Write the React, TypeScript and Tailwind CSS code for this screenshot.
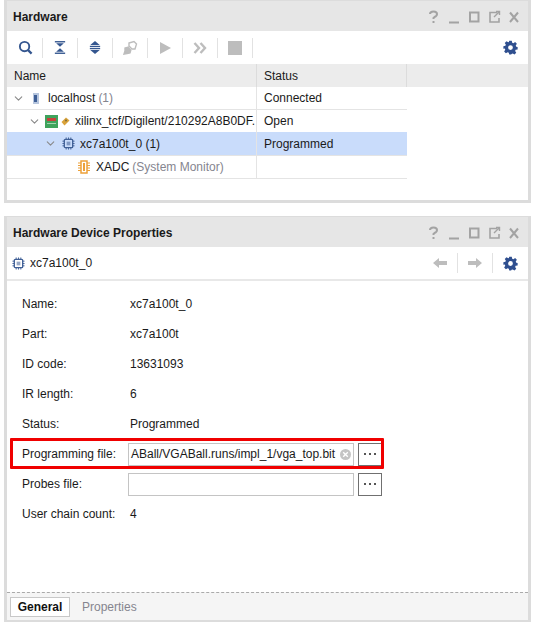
import { ChevronDown } from "lucide-react";
import type { ReactNode } from "react";

function TitleBar({ title }: { title: string }) {
  return (
    <div className="flex h-[30px] shrink-0 items-center justify-between bg-[#e6e6e6] pl-[6px] pr-[9px] pt-[2px]">
      <span className="text-[12px] font-bold text-[#1a1a1a]">{title}</span>
      <svg width="92" height="14" viewBox="0 0 92 14" fill="none" stroke="#a3a3a3" strokeWidth="2">
        <path d="M3 4 Q3 1.5 6.5 1.5 Q10 1.5 10 4 Q10 6 7.5 7 L6.5 8 V9" />
        <rect x="5.5" y="11" width="2" height="2" fill="#a3a3a3" stroke="none" />
        <path d="M22 12.5 H32" />
        <rect x="43" y="2.5" width="8.5" height="9" />
        <path d="M70 2.5 H63 V12 H72 V8" strokeWidth="1.6" />
        <path d="M67 7 L72 2 M69 1.5 H72.5 V5" strokeWidth="1.4" />
        <path d="M83 2.5 L91 12 M91 2.5 L83 12" />
      </svg>
    </div>
  );
}

function Gear() {
  return (
    <svg width="15" height="15" viewBox="0 0 24 24" fill="#2f4f8f">
      <path
        fillRule="evenodd"
        d="M10 1h4l.7 3.2 1.9.8 2.8-1.8 2.8 2.8-1.8 2.8.8 1.9L23.4 11v4l-3.2.7-.8 1.9 1.8 2.8-2.8 2.8-2.8-1.8-1.9.8L13 23h-3l-.7-2.8-1.9-.8-2.8 1.8-2.8-2.8 1.8-2.8-.8-1.9L.6 14v-4l3.2-.7.8-1.9L2.8 4.6 5.6 1.8l2.8 1.8 1-.6zM12 8.2a3.8 3.8 0 1 0 0 7.6 3.8 3.8 0 0 0 0-7.6z"
      />
    </svg>
  );
}

function Chip({ color = "#3f5f96" }: { color?: string }) {
  return (
    <svg width="13" height="13" viewBox="0 0 14 14" fill="none" stroke={color}>
      <rect x="2.5" y="2.5" width="9" height="9" rx="1" strokeWidth="1.4" />
      <rect x="5" y="5" width="4" height="4" fill={color} fillOpacity="0.55" stroke="none" />
      <path d="M4.5 0.5v2M7 0.5v2M9.5 0.5v2M4.5 11.5v2M7 11.5v2M9.5 11.5v2M0.5 4.5h2M0.5 7h2M0.5 9.5h2M11.5 4.5h2M11.5 7h2M11.5 9.5h2" strokeWidth="1" />
    </svg>
  );
}

function ToolSep() {
  return <div className="h-[20px] w-px bg-[#e2e2e2]" />;
}

function ToolButton({ children }: { children: ReactNode }) {
  return <div className="flex w-[34px] items-center justify-center">{children}</div>;
}

function Toolbar() {
  return (
    <div className="flex h-[33px] shrink-0 items-center justify-between">
      <div className="flex items-center pl-px">
        <ToolButton>
          <svg width="15" height="15" viewBox="0 0 16 16" fill="none" stroke="#34568f" strokeWidth="2">
            <circle cx="7" cy="7" r="5" />
            <path d="M10.5 10.5 L14.5 14.5" strokeWidth="2.4" />
          </svg>
        </ToolButton>
        <ToolSep />
        <ToolButton>
          <svg width="12" height="15" viewBox="0 0 14 16" fill="#34568f">
            <rect x="1" y="0.5" width="12" height="1.6" />
            <path d="M2.5 3 H11.5 L7 7 Z M7 9 L11.5 13 H2.5 Z" />
            <rect x="1" y="13.9" width="12" height="1.6" />
          </svg>
        </ToolButton>
        <ToolSep />
        <ToolButton>
          <svg width="12" height="15" viewBox="0 0 14 16" fill="#34568f">
            <path d="M7 0.5 L12.5 5 H1.5 Z" />
            <rect x="1" y="6" width="12" height="1.5" />
            <rect x="1" y="8.5" width="12" height="1.5" />
            <path d="M1.5 11 H12.5 L7 15.5 Z" />
          </svg>
        </ToolButton>
        <ToolSep />
        <ToolButton>
          <svg width="15" height="15" viewBox="0 0 15 15" fill="none" stroke="#bdbdbd" strokeWidth="1.4">
            <path d="M6 3 L11 1.5 L13.5 4 L12 9 L9 9 L6 6 Z" />
            <path d="M6 7 L2 8 L2 11 L1 14 L4 13.5 L7 13 L8 9.5" fill="#bdbdbd" />
          </svg>
        </ToolButton>
        <ToolSep />
        <ToolButton>
          <svg width="13" height="14" viewBox="0 0 13 14" fill="#bdbdbd">
            <path d="M1 1 L12 7 L1 13 Z" />
          </svg>
        </ToolButton>
        <ToolSep />
        <ToolButton>
          <svg width="14" height="12" viewBox="0 0 14 12" fill="none" stroke="#bdbdbd" strokeWidth="2.4">
            <path d="M1.5 1 L6 6 L1.5 11 M7.5 1 L12 6 L7.5 11" />
          </svg>
        </ToolButton>
        <ToolSep />
        <ToolButton>
          <div className="h-[14px] w-[14px] bg-[#bdbdbd]" />
        </ToolButton>
        <ToolSep />
      </div>
      <div className="pr-[10px]">
        <Gear />
      </div>
    </div>
  );
}

function TreeRow({
  indent,
  chevron = true,
  icon,
  label,
  muted,
  status,
  selected,
}: {
  indent: number;
  chevron?: boolean;
  icon: ReactNode;
  label: string;
  muted?: string;
  status?: string;
  selected?: boolean;
}) {
  return (
    <div className={`flex w-[400px] border-b border-[#e4e4e4] ${selected ? "-mt-px h-[24px]" : "h-[23px]"}`}>
      <div
        className={`flex w-[250px] items-center overflow-hidden whitespace-nowrap border-r border-[#e4e4e4] ${selected ? "bg-[#c9dcfb]" : ""}`}
      >
        <div className="flex shrink-0 items-center" style={{ paddingLeft: indent }}>
          {chevron && <ChevronDown size={13} color="#8a8a8a" className="mr-[4px]" />}
          {icon}
        </div>
        <span className="text-[#1a1a1a]">{label}</span>
        {muted && <span className="ml-[3px] text-[#85858f]">{muted}</span>}
      </div>
      <div className={`flex flex-1 items-center pl-[7px] text-[#1a1a1a] ${selected ? "bg-[#c9dcfb]" : ""}`}>{status}</div>
    </div>
  );
}

function PropRow({ label, value }: { label: string; value: string }) {
  return (
    <div className="flex h-[30px] items-center pl-[15px]">
      <span className="w-[108px] text-[#1a1a1a]">{label}</span>
      <span className="text-[#1a1a1a]">{value}</span>
    </div>
  );
}

function DotsButton() {
  return (
    <div className="flex h-[23px] w-[24px] items-center justify-center gap-[3px] border border-[#707070]">
      <div className="h-[2px] w-[2px] bg-[#555]" />
      <div className="h-[2px] w-[2px] bg-[#555]" />
      <div className="h-[2px] w-[2px] bg-[#555]" />
    </div>
  );
}

export default function App() {
  return (
    <div className="h-[627px] w-[542px] bg-white pl-[4px] font-['Liberation_Sans',sans-serif] text-[12px]">
      {/* Hardware panel */}
      <div className="flex h-[203px] w-[527px] flex-col border-x-[3px] border-b-[3px] border-t border-[#dcdcdc]">
        <TitleBar title="Hardware" />
        <Toolbar />
        <div className="flex h-[23px] shrink-0 bg-[#ececec] text-[#1a1a1a]">
          <div className="flex w-[250px] items-center border-r border-[#dcdcdc] pl-[7px]">Name</div>
          <div className="flex w-[150px] items-center border-r border-[#dcdcdc] pl-[7px]">Status</div>
        </div>
        <TreeRow
          indent={5}
          icon={
            <svg width="10" height="13" viewBox="0 0 10 13" className="ml-[2px] mr-[7px]">
              <rect x="2" y="1" width="6" height="11" fill="#b7c6de" />
              <rect x="3" y="3" width="3" height="7" fill="#3f5f96" />
            </svg>
          }
          label="localhost"
          muted="(1)"
          status="Connected"
        />
        <TreeRow
          indent={21}
          icon={
            <div className="mr-[5px] flex items-center gap-[3px]">
              <svg width="13" height="13" viewBox="0 0 13 13">
                <rect width="13" height="13" fill="#3fa35c" />
                <rect x="2" y="3" width="9" height="3" fill="#c9403d" />
                <rect x="2" y="8" width="9" height="1" fill="#9fd4ae" />
              </svg>
              <svg width="9" height="9" viewBox="0 0 9 9">
                <path d="M5 0.5 L8.5 3.5 L3.5 8.5 L0.5 5 Z" fill="#d9a23a" />
                <circle cx="5" cy="3.5" r="1" fill="#7a6a3a" />
              </svg>
            </div>
          }
          label="xilinx_tcf/Digilent/210292A8B0DF."
          status="Open"
        />
        <TreeRow
          indent={37}
          icon={
            <div className="ml-px mr-[5px]">
              <Chip />
            </div>
          }
          label="xc7a100t_0 (1)"
          status="Programmed"
          selected
        />
        <TreeRow
          indent={71}
          chevron={false}
          icon={
            <svg width="12" height="14" viewBox="0 0 12 14" className="mr-[6px]">
              <rect x="3" y="1" width="6" height="12" fill="#fff" stroke="#eda13a" strokeWidth="1.5" />
              <rect x="5" y="3" width="2" height="8" fill="#eda13a" />
              <path d="M0 3h3M0 5.5h3M0 8h3M0 10.5h3M9 3h3M9 5.5h3M9 8h3M9 10.5h3" stroke="#eda13a" />
            </svg>
          }
          label="XADC"
          muted="(System Monitor)"
        />
      </div>

      <div className="h-[13px]" />

      {/* Hardware Device Properties panel */}
      <div className="relative flex h-[406px] w-[527px] flex-col border-x-[3px] border-b-[2px] border-t border-[#dcdcdc]">
        <TitleBar title="Hardware Device Properties" />
        <div className="flex h-[34px] shrink-0 items-center justify-between border-b-[2px] border-[#e8e8e8] pl-[5px]">
          <div className="flex items-center gap-[5px] text-[#1a1a1a]">
            <Chip />
            <span>xc7a100t_0</span>
          </div>
          <div className="flex items-center pr-[10px]">
            <svg width="14" height="10" viewBox="0 0 14 10" fill="#bdbdbd">
              <path d="M0 5 L6 0 V3 H14 V7 H6 V10 Z" />
            </svg>
            <div className="mx-[10px] h-[20px] w-px bg-[#e2e2e2]" />
            <svg width="14" height="10" viewBox="0 0 14 10" fill="#bdbdbd">
              <path d="M14 5 L8 0 V3 H0 V7 H8 V10 Z" />
            </svg>
            <div className="mx-[10px] h-[20px] w-px bg-[#e2e2e2]" />
            <Gear />
          </div>
        </div>

        <div className="flex flex-1 flex-col pt-[8px]">
          <PropRow label="Name:" value="xc7a100t_0" />
          <PropRow label="Part:" value="xc7a100t" />
          <PropRow label="ID code:" value="13631093" />
          <PropRow label="IR length:" value="6" />
          <PropRow label="Status:" value="Programmed" />

          <div className="flex h-[30px] items-center pl-[15px]">
            <span className="w-[106px] text-[#1a1a1a]">Programming file:</span>
            <div className="flex h-[23px] w-[226px] items-center justify-between overflow-hidden border border-[#c4c4c4] pl-[2px] pr-[2px]">
              <span className="whitespace-nowrap text-[#1a1a1a]">ABall/VGABall.runs/impl_1/vga_top.bit</span>
              <svg width="11" height="11" viewBox="0 0 12 12" className="shrink-0">
                <circle cx="6" cy="6" r="6" fill="#c4c4c4" />
                <path d="M3.5 3.5 L8.5 8.5 M8.5 3.5 L3.5 8.5" stroke="#fff" strokeWidth="1.5" />
              </svg>
            </div>
            <div className="ml-[4px]">
              <DotsButton />
            </div>
          </div>

          <div className="flex h-[30px] items-center pl-[15px]">
            <span className="w-[106px] text-[#1a1a1a]">Probes file:</span>
            <div className="h-[23px] w-[226px] border border-[#c4c4c4]" />
            <div className="ml-[4px]">
              <DotsButton />
            </div>
          </div>

          <PropRow label="User chain count:" value="4" />
        </div>

        <div className="flex h-[28px] shrink-0 items-center border-t border-dashed border-[#aaaaaa] bg-[#f5f5f5] pl-[3px]">
          <div className="flex h-[20px] w-[60px] items-center justify-center border border-[#c8c8c8] bg-white font-bold text-[#111]">
            General
          </div>
          <span className="ml-[12px] text-[#85858f]">Properties</span>
        </div>

        {/* red highlight drawn over the programming file row */}
        <div className="absolute left-[3px] top-[221px] h-[31px] w-[374px] rounded-[1px] border-[3px] border-[#f00000]" />
      </div>
    </div>
  );
}
